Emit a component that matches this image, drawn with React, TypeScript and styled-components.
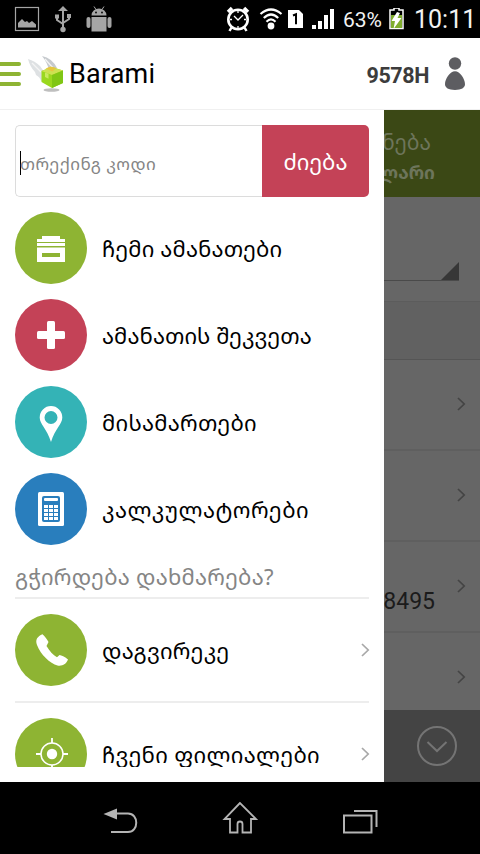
import React from "react";
import styled, { createGlobalStyle } from "styled-components";

const GlobalStyle = createGlobalStyle`
  * { box-sizing: border-box; }
  body { margin: 0; background: #000; }
  svg { display: block; flex: none; }
`;

const latin = `Roboto, "DejaVu Sans", sans-serif`;

const Screen = styled.div`
  width: 480px;
  height: 854px;
  display: flex;
  flex-direction: column;
  overflow: hidden;
  background: #fff;
  font-family: ${latin};
  color: #000;
`;

const StatusBar = styled.header`
  flex: none;
  height: 38px;
  padding: 0 9px 0 14px;
  display: flex;
  align-items: center;
  background: #000;
  color: #f2f2f2;
`;

const StatusGroup = styled.div<{ $end?: boolean }>`
  display: flex;
  align-items: center;
  margin-left: ${(p) => (p.$end ? "auto" : "0")};
`;

const StatusText = styled.span<{ $size: number; $width: number }>`
  font-size: ${(p) => p.$size}px;
  width: ${(p) => p.$width}px;
  line-height: 38px;
  white-space: nowrap;
  padding-top: 1px;
`;

const TitleBar = styled.div`
  flex: none;
  height: 72px;
  display: flex;
  align-items: center;
  background: #fff;
  border-bottom: 1px solid #f0f0f0;
`;

const AppName = styled.h1`
  margin: 0 auto 0 3px;
  font-size: 27px;
  font-weight: 400;
  line-height: 72px;
  letter-spacing: 0.2px;
  padding-top: 1px;
`;

const UserCode = styled.span`
  font-size: 21.5px;
  font-weight: 700;
  color: #3c3c3c;
  margin-right: 15px;
  padding-top: 3px;
  letter-spacing: -0.4px;
`;

const Body = styled.main`
  flex: none;
  height: 672px;
  display: grid;
  grid-template-columns: 384px 96px;
`;

const Drawer = styled.aside`
  height: 657px;
  padding: 15px 15px 0;
  overflow: hidden;
  background: #fff;
`;

const Label = styled.span<{ $size?: number; $gap?: number; $color?: string; $bold?: boolean }>`
  font-family: "Noto Sans Georgian", "DejaVu Sans", sans-serif;
  font-size: ${(p) => p.$size ?? 22}px;
  letter-spacing: ${(p) => p.$gap ?? 0}px;
  color: ${(p) => p.$color ?? "#000"};
  font-weight: ${(p) => (p.$bold ? 700 : 400)};
  white-space: nowrap;
`;

const SearchForm = styled.div`
  display: flex;
  height: 72px;
  margin-bottom: 15px;
`;

const SearchField = styled.div`
  flex: 1;
  display: flex;
  align-items: center;
  padding: 4px 0 0 4px;
  border: 1px solid #dcdcdc;
  border-right: 0;
  border-radius: 5px 0 0 5px;
`;

const Caret = styled.i`
  width: 1px;
  height: 24px;
  margin-right: -1px;
  background: #000;
`;

const SearchButton = styled.button`
  width: 107px;
  border: 0;
  padding: 1px 0 0;
  border-radius: 0 5px 5px 0;
  background: #c44257;
`;

const MenuItem = styled.div`
  display: flex;
  align-items: center;
  height: 72px;
  margin-bottom: 15px;
`;

const Disc = styled.div<{ $color: string }>`
  flex: none;
  width: 72px;
  height: 72px;
  margin-right: 15px;
  border-radius: 50%;
  background: ${(p) => p.$color};
`;

const HelpHeading = styled.div`
  height: 39px;
  border-bottom: 2px solid #ededed;
  display: flex;
  align-items: center;
  padding-bottom: 5px;
`;

const HelpItem = styled.div`
  display: flex;
  align-items: center;
  height: 104px;
  border-bottom: 2px solid #ededed;

  svg:last-child { margin-left: auto; margin-right: -1px; }
`;

const Dimmed = styled.section`
  display: flex;
  flex-direction: column;
  overflow: hidden;
  background: #666;
`;

const Promo = styled.div`
  height: 87px;
  background: #3b4815;
  display: flex;
  flex-direction: column;
  align-items: flex-end;
  padding: 17px 45px 0 0;
  line-height: 30px;
`;

const PromoLine = styled.div<{ $inset?: number }>`
  height: 30px;
  margin-right: ${(p) => p.$inset ?? 0}px;
`;

const Picker = styled.div`
  height: 104px;
  padding-right: 21px;
`;

const PickerLine = styled.div`
  height: 84px;
  border-bottom: 1px solid #4a4a4a;
  display: flex;
  justify-content: flex-end;
  align-items: flex-end;
`;

const Corner = styled.i`
  border-left: 18px solid transparent;
  border-bottom: 18px solid #373737;
`;

const SectionBand = styled.div`
  height: 59px;
  background: #616161;
  border-top: 1px solid #5c5c5c;
  border-bottom: 1px solid #555;
`;

const Row = styled.div<{ $last?: boolean }>`
  flex: none;
  height: ${(p) => (p.$last ? 77 : 91)}px;
  border-bottom: ${(p) => (p.$last ? "0" : "2px solid #5f5f5f")};
  padding: 37px 14px 0 0;
  display: flex;
  justify-content: flex-end;
  align-items: flex-start;
`;

const Amount = styled.span`
  margin: 9px 21px 0 0;
  font-size: 23px;
  line-height: 28px;
  color: #1b1b1b;
`;

const Footer = styled.div`
  height: 72px;
  background: #444;
  display: flex;
  justify-content: flex-end;
  padding: 15px 22px 0 0;
`;

const NavBar = styled.nav`
  flex: none;
  height: 72px;
  display: flex;
  justify-content: center;
  align-items: flex-start;
  background: #000;
  gap: 60px;
`;

const Chevron = ({ color }: { color: string }) => (
  <svg width="10" height="14" viewBox="0 0 10 14">
    <path d="M2 1l6.2 6L2 13" fill="none" stroke={color} strokeWidth="1.7" />
  </svg>
);

const PictureIcon = () => (
  <svg width="26" height="26" viewBox="0 0 26 26" fill="#a5a5a5">
    <rect x="1.5" y="1.5" width="23" height="23" fill="none" stroke="#a5a5a5" strokeWidth="1.2" />
    <path d="M4 21.500v-4.500l4-4 3 3 2-1 2 2 3-2 4 3.500v3z" />
  </svg>
);

const UsbIcon = () => (
  <svg width="18" height="28" viewBox="0 0 18 28" fill="#a5a5a5">
    <path d="M9 3v22M3 10v5l6 4M15 9v5l-6 4" fill="none" stroke="#a5a5a5" strokeWidth="2" />
    <path d="M9 1l5 5H4zM1 9.500h4v4H1zM13 9h4v4h-4z" />
    <circle cx="9" cy="24.500" r="2.700" />
  </svg>
);

const AndroidIcon = () => (
  <svg width="26" height="26" viewBox="0 0 26 26" fill="#a5a5a5">
    <path d="M5.500 9.500a7.500 7 0 0 1 15 0zM5.500 11h15v14.500h-15z" />
    <rect x="0.500" y="11" width="4" height="11" rx="2" />
    <rect x="21.500" y="11" width="4" height="11" rx="2" />
    <path d="M8 .5l2 3M18 .5l-2 3" stroke="#a5a5a5" />
    <circle cx="10" cy="6.500" r=".9" fill="#000" />
    <circle cx="16" cy="6.500" r=".9" fill="#000" />
  </svg>
);

const AlarmIcon = () => (
  <svg width="24" height="26" viewBox="0 0 24 26" fill="none" stroke="#fff">
    <circle cx="12" cy="13.500" r="9.700" strokeWidth="2.600" />
    <path d="M2 6l4-4M22 6l-4-4" strokeWidth="3.500" />
    <path d="M5.500 21.500L3.500 25M18.500 21.500l2 3.500" strokeWidth="2.500" />
    <path d="M8 10l4 4 5-5M12 5v2M12 20v2M4 13.500h2M18 13.500h2" strokeWidth="1.300" />
  </svg>
);

const WifiIcon = () => (
  <svg width="24" height="24" viewBox="0 0 24 24" fill="none" stroke="#fff" strokeWidth="2.200">
    <path d="M1.500 7q10.500-9 21 0M4.800 11q7.200-7 14.400 0M7.500 14.700q4.500-4.500 9 0" />
    <circle cx="12" cy="19" r="3.400" fill="#fff" stroke="none" />
  </svg>
);

const SimIcon = () => (
  <svg width="15" height="18" viewBox="0 0 15 18">
    <path d="M0 0h11l4 4v14H0z" fill="#fff" />
    <path d="M5 5.500l3-1.200v10" fill="none" stroke="#000" strokeWidth="2" />
  </svg>
);

const SignalIcon = () => (
  <svg width="23" height="20" viewBox="0 0 23 20" fill="#fff">
    <path d="M0 16h4v4H0zM6 12h4v8H6zM12 6h4v14h-4zM18 0h4v20h-4z" />
  </svg>
);

const BatteryIcon = () => (
  <svg width="15" height="22" viewBox="0 0 15 22">
    <path d="M5 0h5v2h4v18.500H1V2h4z" fill="none" stroke="#fff" strokeWidth="1.500" />
    <path d="M2 7h11v13H2z" fill="#80ad2e" />
    <path d="M8 4l-5.500 9H6l-1.500 8 8-11H8.500L11 5z" fill="#fff" />
  </svg>
);

const MenuIcon = () => (
  <svg width="21" height="24" viewBox="0 0 21 24">
    <path d="M0 2h19M0 12h19M0 22h19" stroke="#8eb433" strokeWidth="4" strokeLinecap="round" />
  </svg>
);

const BoxLogo = () => (
  <svg width="38" height="38" viewBox="0 0 38 38">
    <ellipse cx="23.500" cy="35" rx="8" ry="1.700" fill="#bfbfbf" />
    <path d="M0 4q7 2 12 7l5 7-1 7-3 1q-1-4-5-6l-1-3q-5-5-7-13z" fill="#dee1e3" />
    <path d="M14 1q10 2 15 12l-8 2q-2-8-7-14z" fill="#c6cace" />
    <path d="M4 8l9 9M17 4l8 9" stroke="#f4f4f4" strokeWidth="1.300" />
    <path d="M13.500 16l10-4 11.500 3.500V28l-11 5-10.500-6z" fill="#9ad81e" />
    <path d="M13.500 16l10-4 11.500 3.500L24 20z" fill="#cde152" />
    <path d="M24 20l11-4.500V28l-11 5z" fill="#80c615" />
    <path d="M17.500 13.500l5-2 6 1.500-4 3.500z" fill="#e6c640" />
    <path d="M17 17.500l3.500 1.300v5L17 22z" fill="#c9ea60" />
  </svg>
);

const PersonIcon = () => (
  <svg width="22" height="34" viewBox="0 0 22 34" fill="#5d5d61">
    <circle cx="11" cy="6.500" r="6.200" />
    <path d="M11 14.300c5 0 10 7.500 10 13 0 3.500-3.500 5.700-10 5.700S1 30.800 1 27.300c0-5.500 5-13 10-13z" />
  </svg>
);

const ParcelGlyph = () => (
  <svg width="72" height="72" viewBox="0 0 72 72">
    <path d="M27 24h18v3h5v3H22v-3h5zM22 31h28v3H22zM22 35.500h28V50H22z" fill="#fff" />
    <path d="M27 41h18v4H27z" fill="#8eb433" />
  </svg>
);

const PlusGlyph = () => (
  <svg width="72" height="72" viewBox="0 0 72 72" fill="#fff">
    <rect x="32" y="22" width="8" height="28" rx="1.500" />
    <rect x="22" y="32" width="28" height="8" rx="1.500" />
  </svg>
);

const PinGlyph = () => (
  <svg width="72" height="72" viewBox="0 0 72 72">
    <path d="M36 20a11.300 11.300 0 0 1 11.300 11.500C47.300 38 40 43 36 56 32 43 24.700 38 24.700 31.500A11.300 11.300 0 0 1 36 20zm0 5a6.500 6.500 0 1 0 0 13 6.500 6.500 0 0 0 0-13z" fill="#fff" />
  </svg>
);

const CalculatorGlyph = () => (
  <svg width="72" height="72" viewBox="0 0 72 72">
    <rect x="23" y="19" width="26" height="34" rx="1.500" fill="#fff" />
    <rect x="27" y="23" width="18" height="26" rx="2" fill="#297ebd" />
    <rect x="29" y="25" width="14" height="3" rx="1" fill="#fff" />
    {[32, 36, 40, 44].map((y) => (
      <path key={y} d={`M29 ${y}h4v3h-4zM34 ${y}h4v3h-4zM39 ${y}h4v3h-4z`} fill="#fff" />
    ))}
  </svg>
);

const PhoneGlyph = () => (
  <svg width="72" height="72" viewBox="0 0 72 72">
    <path d="M26.500 20.300C21.500 22.500 19 25.500 21 31c3.500 9.500 13 18.500 20.500 20.500 4.500 1 9-1.500 10.500-6-3.500-3-6.500-4-8.500-4.500l-2.500 2.300C37 41 33.500 37 30.500 32l2-4c-1.500-2.500-3.500-5.500-6-7.700z" fill="#fff" />
  </svg>
);

const TargetGlyph = () => (
  <svg width="72" height="72" viewBox="0 0 72 72" fill="none" stroke="#fff">
    <circle cx="36" cy="36" r="11" strokeWidth="1.500" />
    <path d="M36 20v5M36 47v5M20 36h5M47 36h5" strokeWidth="1.800" />
    <circle cx="36" cy="36" r="5.200" fill="#fff" stroke="none" />
  </svg>
);

const menu = [
  { text: "ჩემი ამანათები", color: "#8eb433", glyph: <ParcelGlyph />, gap: 0.12 },
  { text: "ამანათის შეკვეთა", color: "#c44257", glyph: <PlusGlyph />, gap: 0.03 },
  { text: "მისამართები", color: "#34b3b6", glyph: <PinGlyph />, gap: 0.22 },
  { text: "კალკულატორები", color: "#297ebd", glyph: <CalculatorGlyph />, gap: 0.45 },
];

const help = [
  { text: "დაგვირეკე", glyph: <PhoneGlyph />, gap: 0.25 },
  { text: "ჩვენი ფილიალები", glyph: <TargetGlyph />, gap: 0.33 },
];

const Gap = styled.i<{ $w: number }>`
  flex: none;
  width: ${(p) => p.$w}px;
`;

export default function App() {
  return (
    <Screen>
      <GlobalStyle />
      <StatusBar>
        <StatusGroup>
          <PictureIcon />
          <Gap $w={14} />
          <UsbIcon />
          <Gap $w={14} />
          <AndroidIcon />
        </StatusGroup>
        <StatusGroup $end>
          <AlarmIcon />
          <Gap $w={9} />
          <WifiIcon />
          <Gap $w={5} />
          <SimIcon />
          <Gap $w={9} />
          <SignalIcon />
          <Gap $w={8} />
          <StatusText $size={21} $width={46}>63%</StatusText>
          <BatteryIcon />
          <Gap $w={10} />
          <StatusText $size={25} $width={57}>10:11</StatusText>
        </StatusGroup>
      </StatusBar>
      <TitleBar>
        <MenuIcon />
        <Gap $w={7} />
        <BoxLogo />
        <AppName>Barami</AppName>
        <UserCode>9578H</UserCode>
        <PersonIcon />
        <Gap $w={14} />
      </TitleBar>
      <Body>
        <Drawer>
          <SearchForm>
            <SearchField>
              <Caret />
              <Label $size={17} $gap={0.45} $color="#858585">თრექინგ კოდი</Label>
            </SearchField>
            <SearchButton>
              <Label $color="#fff">ძიება</Label>
            </SearchButton>
          </SearchForm>
          {menu.map((m) => (
            <MenuItem key={m.text}>
              <Disc $color={m.color}>{m.glyph}</Disc>
              <Label $gap={m.gap}>{m.text}</Label>
            </MenuItem>
          ))}
          <HelpHeading>
            <Label $color="#858585" $gap={0.22}>გჭირდება დახმარება?</Label>
          </HelpHeading>
          {help.map((h) => (
            <HelpItem key={h.text}>
              <Disc $color="#8eb433">{h.glyph}</Disc>
              <Label $gap={h.gap}>{h.text}</Label>
              <Chevron color="#a8a8a8" />
            </HelpItem>
          ))}
        </Drawer>
        <Dimmed>
          <Promo>
            <PromoLine $inset={4}>
              <Label $size={21} $color="#6d755b">ნება</Label>
            </PromoLine>
            <PromoLine>
              <Label $size={18} $color="#6d755b" $bold>ლარი</Label>
            </PromoLine>
          </Promo>
          <Picker>
            <PickerLine>
              <Corner />
            </PickerLine>
          </Picker>
          <SectionBand />
          <Row><Chevron color="#444" /></Row>
          <Row><Chevron color="#444" /></Row>
          <Row>
            <Amount>8495</Amount>
            <Chevron color="#444" />
          </Row>
          <Row $last><Chevron color="#444" /></Row>
          <Footer>
            <svg width="42" height="42" viewBox="0 0 42 42" fill="none" stroke="#747474" strokeWidth="2">
              <circle cx="21" cy="21" r="19" />
              <path d="M11.500 17l9.500 9 9.500-9" />
            </svg>
          </Footer>
        </Dimmed>
      </Body>
      <NavBar>
        <svg width="60" height="72" viewBox="0 0 60 72" fill="none" stroke="#b4b4b4" strokeWidth="2">
          <path d="M26 31.500h12c11 0 11 18.500 0 18.500H21" />
          <path d="M13.500 32L27 26.500v11z" fill="#b4b4b4" stroke="none" />
        </svg>
        <svg width="60" height="72" viewBox="0 0 60 72" fill="none" stroke="#b4b4b4" strokeWidth="1.800">
          <path d="M30 21L14.500 37H20v13.500h7.500V42q0-2.500 2.500-2.500t2.500 2.500v8.500H41V37h5z" />
        </svg>
        <svg width="60" height="72" viewBox="0 0 60 72" fill="none" stroke="#b4b4b4" strokeWidth="2">
          <path d="M14 33.500h27.500v17H14zM24 29h22.500v16" />
        </svg>
      </NavBar>
    </Screen>
  );
}
